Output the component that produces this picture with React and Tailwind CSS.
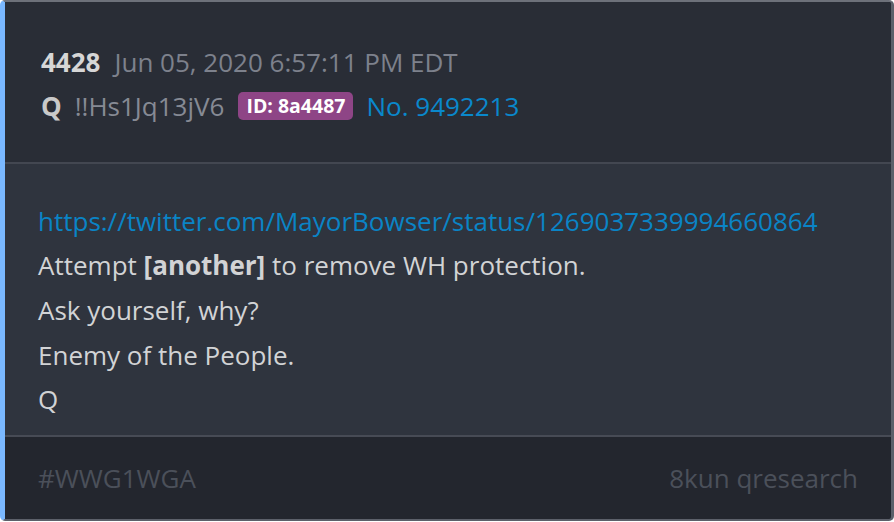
export default function App() {
  return (
    <div className="w-[894px] h-[522px] bg-[#ffffff] font-['Open_Sans',sans-serif]">
      <div className="h-[521px] flex flex-col rounded-[5px] overflow-hidden border-l-[5px] border-l-[#7ab8ff] border-t-2 border-t-[#6d717a] border-r-[3px] border-r-[#5c606a] border-b-2 border-b-[#5c606a] bg-[#23262e]">
        {/* header */}
        <div className="bg-[#292d36] pl-[36px] pt-[38px] pb-[34px] border-b-2 border-[#434751]">
          <div className="flex items-center h-[44px] text-[26px]">
            <span className="font-bold text-[#d6d6d6]">4428</span>
            <span className="ml-[14px] text-[#7d818c]">Jun 05, 2020 6:57:11 PM EDT</span>
          </div>
          <div className="flex items-center h-[44px] text-[26px]">
            <span className="font-bold text-[#c9c9c9]">Q</span>
            <span className="ml-[13px] text-[#868a94]">!!Hs1Jq13jV6</span>
            <span className="ml-[14px] h-[28px] px-[8px] rounded-[5px] bg-[#8e4586] text-white font-bold text-[19.5px] flex items-center">ID: 8a4487</span>
            <span className="ml-[13px] text-[#0a88cc]">No. 9492213</span>
          </div>
        </div>
        {/* body */}
        <div className="bg-[#2f343e] pl-[33px] pt-[35px] pb-[14px] border-b-2 border-[#474b55] text-[26px] text-[#d2d3d5]">
          <div className="h-[44px] flex items-center text-[#0a84c6]">https://twitter.com/MayorBowser/status/1269037339994660864</div>
          <div className="h-[45px] flex items-center">
            <span>Attempt&nbsp;</span>
            <span className="font-bold">[another]</span>
            <span>&nbsp;to remove WH protection.</span>
          </div>
          <div className="h-[45px] flex items-center">Ask yourself, why?</div>
          <div className="h-[44px] flex items-center">Enemy of the People.</div>
          <div className="h-[44px] flex items-center">Q</div>
        </div>
        {/* footer */}
        <div className="flex-1 flex items-center justify-between pl-[33px] pr-[33px] text-[26px] text-[#4b505a]">
          <span>#WWG1WGA</span>
          <span>8kun qresearch</span>
        </div>
      </div>
    </div>
  );
}
